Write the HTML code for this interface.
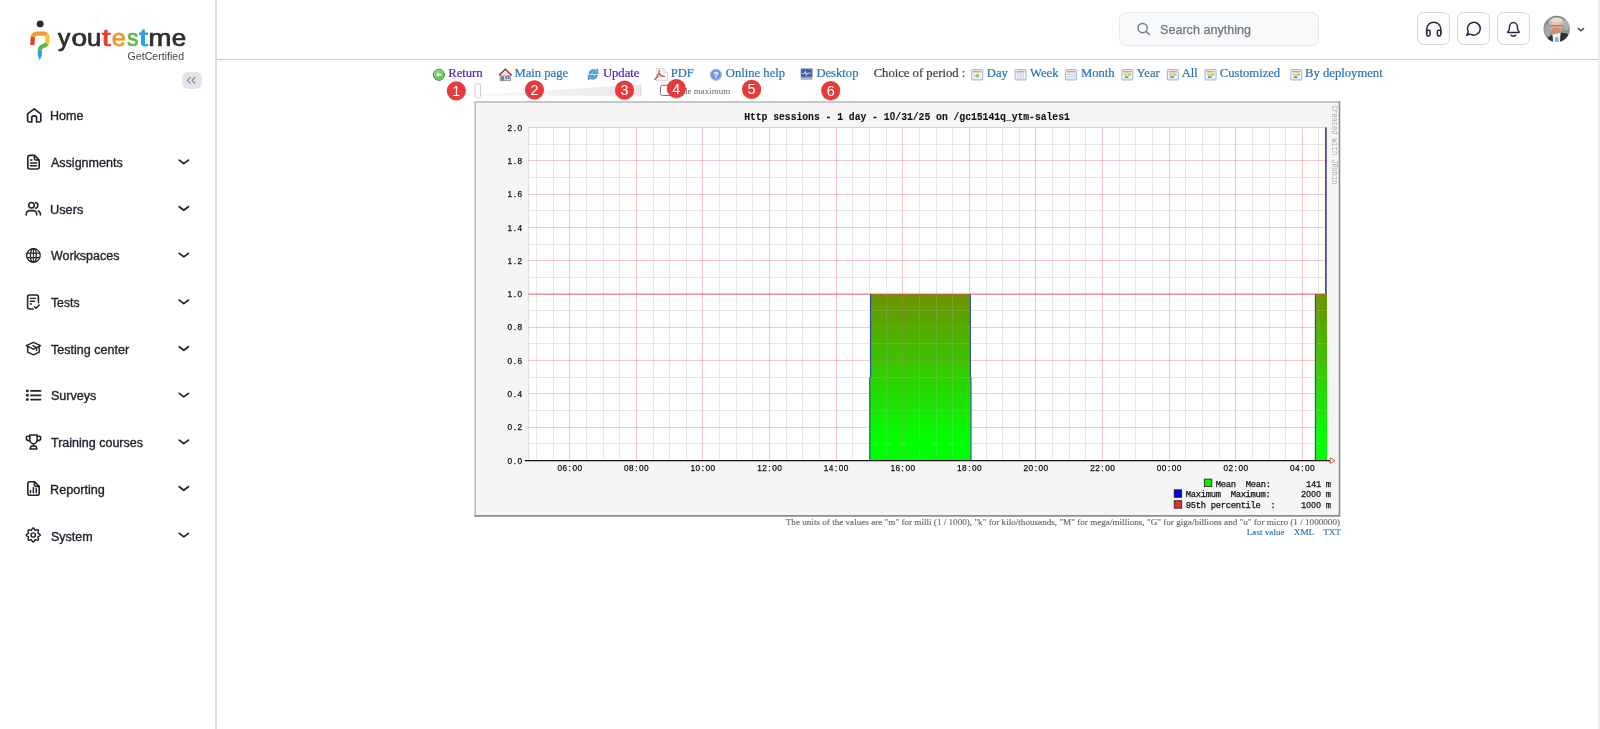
<!DOCTYPE html>
<html><head><meta charset="utf-8"><title>YouTestMe</title>
<style>
*{box-sizing:border-box;margin:0;padding:0}
html,body{width:1600px;height:729px;overflow:hidden;background:#fff}
body{position:relative;font-family:"Liberation Sans",sans-serif;color:#1f2430}
.abs{position:absolute}
svg{position:absolute;left:0;top:0;overflow:visible}
.ml{position:absolute;height:20px;line-height:20px;font-size:12.3px;color:#20242e;white-space:nowrap;transform-origin:0 50%;-webkit-text-stroke:0.35px #20242e}
.tt{position:absolute;top:66px;height:15px;line-height:15px;font-family:"Liberation Serif",serif;font-size:12.65px;white-space:nowrap;color:#2874b2;transform-origin:0 50%;-webkit-text-stroke:0.2px currentColor}
.tt.v{color:#5420a6}
.tt.k{color:#3a3a3a}
.badge{position:absolute;width:19px;height:19px;border-radius:50%;background:#e5383b;color:#fff;font-family:"Liberation Sans",sans-serif;font-size:14px;line-height:19px;text-align:center;box-shadow:0 1px 2px rgba(0,0,0,.3)}
.hb{position:absolute;top:12.2px;width:32.6px;height:32.8px;border:1.1px solid #cfd2d9;border-radius:6.5px;background:#fdfdfe}
</style></head><body><div id="root" style="position:absolute;left:0;top:0;width:1600px;height:729px;opacity:0.999">

<div class="abs" style="left:215px;top:0;width:2px;height:729px;background:#dcdce9"></div>
<div class="abs" style="left:217px;top:59px;width:1383px;height:1px;background:#c8cbd2"></div>
<div class="abs" style="left:181.5px;top:72px;width:20.5px;height:16.5px;border-radius:6px;background:#e2e6ec"></div>
<div class="ml" id="ml0" style="left:49.72px;top:106.04px;transform:scaleX(1.0175)">Home</div>
<div class="ml" id="ml1" style="left:51.43px;top:152.78px;transform:scaleX(1.0180)">Assignments</div>
<div class="ml" id="ml2" style="left:50.26px;top:199.52px;transform:scaleX(1.0382)">Users</div>
<div class="ml" id="ml3" style="left:51.20px;top:246.26px;transform:scaleX(1.0139)">Workspaces</div>
<div class="ml" id="ml4" style="left:50.98px;top:293.00px;transform:scaleX(0.9949)">Tests</div>
<div class="ml" id="ml5" style="left:50.97px;top:339.74px;transform:scaleX(1.0199)">Testing center</div>
<div class="ml" id="ml6" style="left:50.68px;top:386.48px;transform:scaleX(1.0201)">Surveys</div>
<div class="ml" id="ml7" style="left:50.97px;top:433.22px;transform:scaleX(1.0166)">Training courses</div>
<div class="ml" id="ml8" style="left:50.21px;top:479.96px;transform:scaleX(1.0285)">Reporting</div>
<div class="ml" id="ml9" style="left:50.68px;top:526.70px;transform:scaleX(1.0167)">System</div>
<svg width="217" height="729" viewBox="0 0 217 729" fill="none" stroke="#20242e" stroke-width="1.7" stroke-linecap="round" stroke-linejoin="round">
<g stroke="#7b8494" stroke-width="1.1"><path d="M190.4 77.3 L187.4 80.3 L190.4 83.3"/><path d="M194.9 77.3 L191.9 80.3 L194.9 83.3"/></g>
<path d="M179.2 160.1 L183.8 163.6 L188.4 160.1" stroke-width="1.75"/>
<path d="M179.2 206.7 L183.8 210.2 L188.4 206.7" stroke-width="1.75"/>
<path d="M179.2 253.4 L183.8 256.9 L188.4 253.4" stroke-width="1.75"/>
<path d="M179.2 300.1 L183.8 303.6 L188.4 300.1" stroke-width="1.75"/>
<path d="M179.2 346.8 L183.8 350.3 L188.4 346.8" stroke-width="1.75"/>
<path d="M179.2 393.4 L183.8 396.9 L188.4 393.4" stroke-width="1.75"/>
<path d="M179.2 440.1 L183.8 443.6 L188.4 440.1" stroke-width="1.75"/>
<path d="M179.2 486.8 L183.8 490.3 L188.4 486.8" stroke-width="1.75"/>
<path d="M179.2 533.4 L183.8 536.9 L188.4 533.4" stroke-width="1.75"/>
<path d="M27.6 113.9 L34.2 108.9 L40.8 113.9 V120.4 a1.6 1.6 0 0 1 -1.6 1.6 H36.6 V117.6 a1.8 1.8 0 0 0 -1.8 -1.8 h-1.2 a1.8 1.8 0 0 0 -1.8 1.8 V122 H29.2 a1.6 1.6 0 0 1 -1.6 -1.6 Z"/>
<path d="M29.8 155.4 H34.6 L39.2 160.0 V167 a2 2 0 0 1 -2 2 H29.8 a2 2 0 0 1 -2 -2 V157.4 a2 2 0 0 1 2 -2 Z M34.4 155.6 V158.6 a1.4 1.4 0 0 0 1.4 1.4 H39" stroke-width="1.6"/>
<path d="M30.4 160.1 H31.9 M30.4 162.9 H36.6 M30.4 165.7 H36.6" stroke-width="1.5"/>
<circle cx="31.5" cy="205.3" r="2.75" stroke-width="1.6"/>
<path d="M35.6 202.4 a3 3 0 0 1 0 5.8" stroke-width="1.6"/>
<path d="M26.3 214.9 v-0.9 a3.4 3.4 0 0 1 3.4 -3.4 h3.6 a3.4 3.4 0 0 1 3.4 3.4 v0.9" stroke-width="1.6"/>
<path d="M38.3 210.9 a3.4 3.4 0 0 1 2.1 3.1 v0.9" stroke-width="1.6"/>
<g stroke-width="1.3"><circle cx="33.4" cy="255.4" r="6.75"/><ellipse cx="33.4" cy="255.4" rx="2.9" ry="6.8"/><path d="M27.1 253.2 H39.7 M27.1 257.6 H39.7"/><path d="M33.4 248.8 V262" stroke-width="1.05"/></g>
<path d="M33.2 309 H29.6 a2 2 0 0 1 -2 -2 V297 a2 2 0 0 1 2 -2 H36.4 a2 2 0 0 1 2 2 V302.6" stroke-width="1.6"/>
<path d="M30.3 298.4 H35.6 M30.3 301.2 H34.5 M30.3 304 H31.4" stroke-width="1.4"/>
<path d="M34.5 306.8 L35.9 308.2 L39.3 305" stroke-width="1.5"/>
<g stroke-width="1.45"><path d="M33.4 342.3 L40.5 345.7 L33.4 349.2 L26.3 345.7 Z"/><path d="M27.7 346.6 V352.1 L33.4 354.8 L39.2 352.1 V346.6"/><path d="M33 345.6 L36.5 347.7 V350.4"/></g>
<g stroke-width="1.8"><path d="M31 390.9 H40.5 M31 395.3 H40.5 M31 399.6 H40.5"/></g>
<g fill="#20242e" stroke="none"><circle cx="27.3" cy="390.9" r="1.45"/><circle cx="27.3" cy="395.3" r="1.45"/><circle cx="27.3" cy="399.6" r="1.45"/></g>
<g stroke-width="1.55"><path d="M29.8 434.9 H37.2 V439.8 a3.7 3.9 0 0 1 -7.4 0 Z"/><path d="M29.8 436.2 H27.6 a1.3 1.3 0 0 0 -1.3 1.3 v0.6 a2.6 2.6 0 0 0 2.6 2.6 h1"/><path d="M37.2 436.2 H39.4 a1.3 1.3 0 0 1 1.3 1.3 v0.6 a2.6 2.6 0 0 1 -2.6 2.6 h-1"/><path d="M33.5 443.8 V446"/><path d="M31.2 446 H35.8 L37 448.9 H30 Z"/></g>
<path d="M29.8 481.8 H34.6 L39.2 486.40000000000003 V493.2 a2 2 0 0 1 -2 2 H29.8 a2 2 0 0 1 -2 -2 V483.8 a2 2 0 0 1 2 -2 Z M34.4 482.0 V485.0 a1.4 1.4 0 0 0 1.4 1.4 H39" stroke-width="1.6"/>
<path d="M30.5 490.4 V492.8 M33.4 487.5 V492.8 M36.3 488.6 V492.8" stroke-width="1.5"/>
<path d="M33.25 528.00 L33.52 528.05 L33.78 528.20 L34.03 528.44 L34.24 528.73 L34.43 529.07 L34.59 529.40 L34.74 529.71 L34.88 529.98 L35.03 530.17 L35.20 530.29 L35.40 530.33 L35.65 530.29 L35.93 530.21 L36.26 530.09 L36.61 529.97 L36.98 529.87 L37.34 529.81 L37.68 529.82 L37.97 529.89 L38.20 530.05 L38.36 530.28 L38.43 530.57 L38.44 530.91 L38.38 531.27 L38.28 531.64 L38.16 531.99 L38.04 532.32 L37.96 532.60 L37.92 532.85 L37.96 533.05 L38.08 533.22 L38.27 533.37 L38.54 533.51 L38.85 533.66 L39.18 533.82 L39.52 534.01 L39.81 534.22 L40.05 534.47 L40.20 534.73 L40.25 535.00 L40.20 535.27 L40.05 535.53 L39.81 535.78 L39.52 535.99 L39.18 536.18 L38.85 536.34 L38.54 536.49 L38.27 536.63 L38.08 536.78 L37.96 536.95 L37.92 537.15 L37.96 537.40 L38.04 537.68 L38.16 538.01 L38.28 538.36 L38.38 538.73 L38.44 539.09 L38.43 539.43 L38.36 539.72 L38.20 539.95 L37.97 540.11 L37.68 540.18 L37.34 540.19 L36.98 540.13 L36.61 540.03 L36.26 539.91 L35.93 539.79 L35.65 539.71 L35.40 539.67 L35.20 539.71 L35.03 539.83 L34.88 540.02 L34.74 540.29 L34.59 540.60 L34.43 540.93 L34.24 541.27 L34.03 541.56 L33.78 541.80 L33.52 541.95 L33.25 542.00 L32.98 541.95 L32.72 541.80 L32.47 541.56 L32.26 541.27 L32.07 540.93 L31.91 540.60 L31.76 540.29 L31.62 540.02 L31.47 539.83 L31.30 539.71 L31.10 539.67 L30.85 539.71 L30.57 539.79 L30.24 539.91 L29.89 540.03 L29.52 540.13 L29.16 540.19 L28.82 540.18 L28.53 540.11 L28.30 539.95 L28.14 539.72 L28.07 539.43 L28.06 539.09 L28.12 538.73 L28.22 538.36 L28.34 538.01 L28.46 537.68 L28.54 537.40 L28.58 537.15 L28.54 536.95 L28.42 536.78 L28.23 536.63 L27.96 536.49 L27.65 536.34 L27.32 536.18 L26.98 535.99 L26.69 535.78 L26.45 535.53 L26.30 535.27 L26.25 535.00 L26.30 534.73 L26.45 534.47 L26.69 534.22 L26.98 534.01 L27.32 533.82 L27.65 533.66 L27.96 533.51 L28.23 533.37 L28.42 533.22 L28.54 533.05 L28.58 532.85 L28.54 532.60 L28.46 532.32 L28.34 531.99 L28.22 531.64 L28.12 531.27 L28.06 530.91 L28.07 530.57 L28.14 530.28 L28.30 530.05 L28.53 529.89 L28.82 529.82 L29.16 529.81 L29.52 529.87 L29.89 529.97 L30.24 530.09 L30.57 530.21 L30.85 530.29 L31.10 530.33 L31.30 530.29 L31.47 530.17 L31.62 529.98 L31.76 529.71 L31.91 529.40 L32.07 529.07 L32.26 528.73 L32.47 528.44 L32.72 528.20 L32.98 528.05 L33.25 528.00 Z" stroke-width="1.45"/>
<circle cx="33.25" cy="535.0" r="2.15" stroke-width="1.45"/>
</svg>
<svg width="217" height="70" viewBox="0 0 217 70">
<circle cx="40.2" cy="23.9" r="3.45" fill="#2b2d2f"/>
<g fill="none" stroke-width="4.3" stroke-linecap="butt" stroke-linejoin="round">
<path d="M32.25 45.2 L33.0 36.0" stroke="#e2442b"/>
<path d="M32.9 37 Q33.2 33.6 38 33.55 L43.4 33.6 Q45.6 33.6 46.7 34.9" stroke="#f59a34"/>
<path d="M46.3 34.5 Q47.6 35.8 47.5 38.2 L47.3 41.4 Q47.2 43 46.4 44" stroke="#fac52a"/>
<path d="M46.8 43.5 Q45.7 45.3 43.3 46 Q39.8 47 39.8 50.6" stroke="#55b947"/>
</g>
<path d="M37.65 50.2 H41.95 L41.7 55.6 L39.7 60.4 L37.9 55.6 Z" fill="#2a9de2"/>
</svg>
<svg width="217" height="70" viewBox="0 0 217 70" font-family="Liberation Sans" stroke-linejoin="round">
<text transform="translate(58.12 45.5) scale(1.061 1)" font-size="23.1" fill="#2e2e2e" stroke="#2e2e2e" stroke-width="0.75">y</text>
<text transform="translate(71.50 45.5) scale(1.215 1)" font-size="23.1" fill="#2e2e2e" stroke="#2e2e2e" stroke-width="0.75">o</text>
<text transform="translate(86.92 45.5) scale(1.106 1)" font-size="23.1" fill="#2e2e2e" stroke="#2e2e2e" stroke-width="0.75">u</text>
<text transform="translate(101.69 45.5) scale(1.399 1)" font-size="23.1" fill="#e0402c" stroke="#e0402c" stroke-width="0.75">t</text>
<text transform="translate(111.70 45.5) scale(1.093 1)" font-size="23.1" fill="#f5922f" stroke="#f5922f" stroke-width="0.75">e</text>
<text transform="translate(126.94 45.5) scale(0.988 1)" font-size="23.1" fill="#5cb947" stroke="#5cb947" stroke-width="0.75">s</text>
<text transform="translate(138.88 45.5) scale(1.415 1)" font-size="23.1" fill="#2c9fe0" stroke="#2c9fe0" stroke-width="0.75">t</text>
<text transform="translate(148.55 45.5) scale(1.189 1)" font-size="23.1" fill="#2e2e2e" stroke="#2e2e2e" stroke-width="0.75">m</text>
<text transform="translate(171.78 45.5) scale(1.121 1)" font-size="23.1" fill="#2e2e2e" stroke="#2e2e2e" stroke-width="0.75">e</text>
</svg>
<div class="abs" id="getc" style="left:127.6px;top:49.3px;height:14px;line-height:14px;font-size:10.6px;color:#454545;white-space:nowrap;transform-origin:0 50%">GetCertified</div>
<div class="abs" style="left:1119px;top:12px;width:200px;height:34px;border:1px solid #e5e8ed;border-radius:7px;background:#f8f9fb"></div>
<div class="abs" id="srch" style="left:1159.6px;top:20.9px;height:18px;line-height:18px;font-size:13px;transform:scaleX(0.9686);color:#6e7683;white-space:nowrap;transform-origin:0 50%;-webkit-text-stroke:0.25px #6e7683">Search anything</div>
<div class="hb" style="left:1417.2px"></div>
<div class="hb" style="left:1457.3px"></div>
<div class="hb" style="left:1497.4px"></div>
<svg width="1600" height="60" viewBox="0 0 1600 60" fill="none" stroke-linecap="round" stroke-linejoin="round">
<g stroke="#6e7683" stroke-width="1.4"><circle cx="1142.6" cy="28.1" r="4.6"/><path d="M1146 31.5 L1149.4 34.6"/></g>
<g stroke="#23264c" stroke-width="1.5">
<path d="M1426.7 33 V29.2 a7.05 7.05 0 0 1 14.1 0 V33"/>
<path d="M1426.7 31.4 a1.2 1.2 0 0 1 1.2 -1.2 h0.9 a1.3 1.3 0 0 1 1.3 1.3 v3 a1.5 1.5 0 0 1 -1.5 1.5 h-0.4 a1.5 1.5 0 0 1 -1.5 -1.5 Z"/>
<path d="M1440.8 31.4 a1.2 1.2 0 0 0 -1.2 -1.2 h-0.9 a1.3 1.3 0 0 0 -1.3 1.3 v3 a1.5 1.5 0 0 0 1.5 1.5 h0.4 a1.5 1.5 0 0 0 1.5 -1.5 Z"/>
<path d="M1469.2 34.2 L1466.7 35.3 L1468.3 31.9 A6.4 6.4 0 1 1 1470.9 34.4 Q1470 34 1469.2 34.2 Z"/>
<path d="M1509.5 27.2 a3.95 4.6 0 0 1 7.9 0 c0 3.4 1.7 4.6 1.7 4.6 a0.35 0.35 0 0 1 -0.2 0.6 H1508 a0.35 0.35 0 0 1 -0.2 -0.6 s1.7 -1.2 1.7 -4.6 Z"/><path d="M1511.3 35.2 a2.4 1.6 0 0 0 4.3 0"/>
</g>
<path d="M1578.2 28.4 L1580.9 30.8 L1583.6 28.4" stroke="#30333b" stroke-width="1.35"/>
<defs><clipPath id="av"><circle cx="1556.65" cy="28.9" r="13.15"/></clipPath>
<filter id="avb" x="-10%" y="-10%" width="120%" height="120%"><feGaussianBlur stdDeviation="0.65"/></filter>
<radialGradient id="avbg" cx="0.5" cy="0.45" r="0.6"><stop offset="0" stop-color="#a9aca8"/><stop offset="0.7" stop-color="#878b88"/><stop offset="1" stop-color="#6c706e"/></radialGradient></defs>
<g clip-path="url(#av)" stroke="none"><g filter="url(#avb)">
<rect x="1541" y="13" width="32" height="32" fill="url(#avbg)"/>
<ellipse cx="1547.6" cy="30" rx="3.2" ry="6" fill="#a9adab" opacity="0.8"/><ellipse cx="1566.4" cy="24.5" rx="3" ry="6" fill="#b3b6b3" opacity="0.85"/><ellipse cx="1556" cy="17" rx="7" ry="2" fill="#6f7472" opacity="0.6"/>
<path d="M1541.5 46 L1545.6 39.6 L1552.2 34.6 L1556.2 42.5 L1560.4 32.6 L1567 33.4 L1572 38.6 L1572 46 Z" fill="#2e3239"/>
<path d="M1552.4 34.4 L1560.6 32.4 L1559.6 46 L1553.6 46 Z" fill="#f0f2f5"/>
<path d="M1555.3 37.4 L1558.1 36.9 L1559.4 46 L1554.5 46 Z" fill="#8ab0cc"/>
<ellipse cx="1556.3" cy="22.2" rx="7.5" ry="5" fill="#cbc5b7"/>
<ellipse cx="1556.9" cy="20.2" rx="5.4" ry="2.5" fill="#e2ded3"/>
<ellipse cx="1556.4" cy="27.9" rx="6" ry="6" fill="#dcaa91"/>
<ellipse cx="1556.4" cy="30.6" rx="4.6" ry="3" fill="#cd8b74" opacity="0.85"/>
<ellipse cx="1556.4" cy="23.7" rx="4.6" ry="1.4" fill="#e6c5ae" opacity="0.9"/>
<path d="M1551.2 25.7 H1561.8" stroke="#705f57" stroke-width="0.9" opacity="0.75"/>
</g></g>
</svg>
<div class="abs" style="left:1598px;top:0;width:2px;height:729px;background:#f7e9ec"></div>
<div class="tt v" id="tt0" style="left:448.25px;transform:scaleX(1.0000)">Return</div>
<div class="tt " id="tt1" style="left:514.42px;transform:scaleX(1.0000)">Main page</div>
<div class="tt v" id="tt2" style="left:602.92px;transform:scaleX(1.0000)">Update</div>
<div class="tt " id="tt3" style="left:670.64px;transform:scaleX(1.0000)">PDF</div>
<div class="tt " id="tt4" style="left:725.80px;transform:scaleX(1.0000)">Online help</div>
<div class="tt " id="tt5" style="left:816.38px;transform:scaleX(1.0000)">Desktop</div>
<div class="tt k" id="tt6" style="left:873.66px;transform:scaleX(1.0000)">Choice of period :</div>
<div class="tt " id="tt7" style="left:986.85px;transform:scaleX(1.0000)">Day</div>
<div class="tt " id="tt8" style="left:1030.10px;transform:scaleX(1.0000)">Week</div>
<div class="tt " id="tt9" style="left:1080.98px;transform:scaleX(1.0000)">Month</div>
<div class="tt " id="tt10" style="left:1136.45px;transform:scaleX(1.0000)">Year</div>
<div class="tt " id="tt11" style="left:1181.63px;transform:scaleX(1.0000)">All</div>
<div class="tt " id="tt12" style="left:1219.80px;transform:scaleX(1.0000)">Customized</div>
<div class="tt " id="tt13" style="left:1305.08px;transform:scaleX(1.0000)">By deployment</div>
<svg width="1600" height="110" viewBox="0 0 1600 110">
<defs><linearGradient id="wd" x1="0" x2="1"><stop offset="0" stop-color="#f7f7f7"/><stop offset="1" stop-color="#e8e8e8"/></linearGradient></defs>
<path d="M481 94.6 L640.6 84.6 V95.8 H481 Z" fill="url(#wd)"/>
<path d="M640.9 84.4 V96" stroke="#d4d4d4" stroke-width="0.9"/>
<rect x="474.9" y="84" width="5.6" height="13.4" rx="0.8" fill="#fff" stroke="#d2cfcf" stroke-width="1"/>
<rect x="660.5" y="85.3" width="10.8" height="10.2" rx="2" fill="#fff" stroke="#767676" stroke-width="1"/>
</svg>
<div class="abs" id="hidemax" style="left:674px;top:85px;height:12px;line-height:12px;font-family:'Liberation Serif',serif;font-size:9px;color:#636363;white-space:nowrap;transform-origin:0 50%">Hide maximum</div>
<svg width="1600" height="110" viewBox="0 0 1600 110">
<defs>
<radialGradient id="rg1" cx="0.45" cy="0.4" r="0.6"><stop offset="0" stop-color="#98e07e"/><stop offset="0.75" stop-color="#58b946"/><stop offset="1" stop-color="#4aa83c"/></radialGradient>
<radialGradient id="hg1" cx="0.45" cy="0.4" r="0.6"><stop offset="0" stop-color="#9dbdf0"/><stop offset="0.65" stop-color="#5b8fd6"/><stop offset="1" stop-color="#8fb0e4"/></radialGradient>
</defs>
<circle cx="438.9" cy="74.8" r="5.55" fill="url(#rg1)" stroke="#3f8e3c" stroke-width="1"/>
<circle cx="438.9" cy="74.8" r="4.45" fill="none" stroke="#c4f0b4" stroke-width="0.7" opacity="0.85"/>
<path d="M435.9 74.8 L438.7 72.2 V73.8 H441.6 V75.8 H438.7 V77.4 Z" fill="#e6fadf"/>
<path d="M500 75.2 H510.6 V80.6 H500 Z" fill="#d2d2ce" stroke="#84847e" stroke-width="0.8"/>
<rect x="501.2" y="76.2" width="2.6" height="4.2" fill="#6a7686"/>
<rect x="505.6" y="76.2" width="3.8" height="2.8" fill="#3d5a96"/>
<path d="M505.6 77.6 H509.4 M507.5 76.2 V79" stroke="#dfe6f2" stroke-width="0.5"/>
<path d="M499.1 75.2 L505.35 69.2 L511.6 75.2" fill="none" stroke="#b01f22" stroke-width="1.45" stroke-linejoin="miter"/>
<path d="M500.6 75.3 L505.35 70.7 L510.1 75.3 Z" fill="#e6e6e2"/>
<path d="M588.9 73.4 Q589.6 69.7 593.4 69.5 Q594.8 69.5 595.8 70.2 L597.7 68.9 L597.9 73.7 L592.6 73.7 L594.2 72.3 Q592.3 71.4 591.2 73.4 Z" fill="#58b2e8" stroke="#2d78b6" stroke-width="0.7" stroke-linejoin="round"/>
<path d="M588.9 73.4 Q589.6 69.7 593.4 69.5 Q594.8 69.5 595.8 70.2 L597.7 68.9 L597.9 73.7 L592.6 73.7 L594.2 72.3 Q592.3 71.4 591.2 73.4 Z" fill="#58b2e8" stroke="#2d78b6" stroke-width="0.7" stroke-linejoin="round" transform="rotate(180 593.1 74.4)"/>
<path d="M656.3 68.5 H663.7 L667.6 72.4 V80.8 H656.3 Z" fill="#fbfbfb" stroke="#cfd4d3" stroke-width="0.9"/>
<path d="M663.7 68.5 V72.4 H667.6" fill="#eef0f0" stroke="#cfd4d3" stroke-width="0.8"/>
<g fill="none" stroke="#c23b3d" stroke-width="1.15" stroke-linecap="round"><path d="M654.7 79.6 Q657.8 76.6 658.8 73.2 Q659.5 71 659.1 70.2"/><path d="M658.9 73 Q660.4 76.2 664.5 76.5"/><path d="M657.2 77.2 Q660 75.4 662.6 75.9" stroke-width="0.7" opacity="0.7"/></g>
<circle cx="716" cy="74.8" r="5.6" fill="url(#hg1)" stroke="#a8c0e8" stroke-width="0.9"/>
<text x="716" y="78.2" font-family="Liberation Sans" font-weight="bold" font-size="8.6" fill="#fff" text-anchor="middle">?</text>
<rect x="800.8" y="68.6" width="11.6" height="11.3" fill="#aeb7ca"/>
<rect x="800.8" y="68.6" width="11.6" height="8.7" fill="#4565ac"/>
<rect x="801.8" y="69.6" width="9.6" height="6.7" fill="#3a5ba4" stroke="#6484c6" stroke-width="0.5"/>
<path d="M802.2 73.6 H804.4 L805.4 71.4 L806.4 75.4 L807.2 73.2 H810.8" fill="none" stroke="#fff" stroke-width="0.8"/>
<rect x="971.6999999999999" y="69.6" width="11" height="10.4" rx="1" fill="#f6f8fd" stroke="#aab9de" stroke-width="1.15"/>
<rect x="973.0999999999999" y="71" width="8.2" height="1.5" fill="#f2995c"/>
<rect x="972.0999999999999" y="78.6" width="10.2" height="1.3" fill="#bccbee"/>
<rect x="974.3" y="74.2" width="5.6" height="2.8" fill="#e8f6dc"/>
<path d="M974.9 74.6 V76.8 M976.5 74.6 h2.2 v2.2 h-2.2 Z" fill="none" stroke="#58b23c" stroke-width="0.8"/>
<rect x="1015.1" y="69.6" width="11" height="10.4" rx="1" fill="#f6f8fd" stroke="#aab9de" stroke-width="1.15"/>
<rect x="1016.5" y="71" width="8.2" height="1.5" fill="#f2995c"/>
<rect x="1015.5" y="78.6" width="10.2" height="1.3" fill="#bccbee"/>
<path d="M1017.9000000000001 73.2 V78.2 M1020.5 73.2 V78.2 M1023.1 73.2 V78.2" stroke="#c4d2f2" stroke-width="1.4"/>
<rect x="1065.5" y="69.6" width="11" height="10.4" rx="1" fill="#f6f8fd" stroke="#aab9de" stroke-width="1.15"/>
<rect x="1066.8999999999999" y="71" width="8.2" height="1.5" fill="#f2995c"/>
<rect x="1065.8999999999999" y="78.6" width="10.2" height="1.3" fill="#bccbee"/>
<path d="M1066.8999999999999 74.4 H1075.1 M1066.8999999999999 76.6 H1075.1" stroke="#c4d2f2" stroke-width="1.2"/>
<rect x="1121.9" y="69.6" width="11" height="10.4" rx="1" fill="#f6f8fd" stroke="#aab9de" stroke-width="1.15"/>
<rect x="1123.3" y="71" width="8.2" height="1.5" fill="#f2995c"/>
<rect x="1122.3" y="78.6" width="10.2" height="1.3" fill="#bccbee"/>
<rect x="1123.9" y="73.6" width="3" height="2" fill="#f0c058"/>
<rect x="1127.5" y="73.6" width="3.6" height="2" fill="#8ccf6c"/>
<rect x="1124.9" y="76.2" width="3.6" height="1.8" fill="#58b23c"/>
<rect x="1167.3000000000002" y="69.6" width="11" height="10.4" rx="1" fill="#f6f8fd" stroke="#aab9de" stroke-width="1.15"/>
<rect x="1168.7" y="71" width="8.2" height="1.5" fill="#f2995c"/>
<rect x="1167.7" y="78.6" width="10.2" height="1.3" fill="#bccbee"/>
<rect x="1169.3000000000002" y="73.6" width="3" height="2" fill="#f0c058"/>
<rect x="1172.9" y="73.6" width="3.6" height="2" fill="#8ccf6c"/>
<rect x="1170.3000000000002" y="76.2" width="3.6" height="1.8" fill="#58b23c"/>
<rect x="1205.0" y="69.6" width="11" height="10.4" rx="1" fill="#f6f8fd" stroke="#aab9de" stroke-width="1.15"/>
<rect x="1206.3999999999999" y="71" width="8.2" height="1.5" fill="#f2995c"/>
<rect x="1205.3999999999999" y="78.6" width="10.2" height="1.3" fill="#bccbee"/>
<rect x="1207.0" y="73.6" width="3" height="2" fill="#f0c058"/>
<rect x="1210.6" y="73.6" width="3.6" height="2" fill="#8ccf6c"/>
<rect x="1208.0" y="76.2" width="3.6" height="1.8" fill="#58b23c"/>
<rect x="1290.8000000000002" y="69.6" width="11" height="10.4" rx="1" fill="#f6f8fd" stroke="#aab9de" stroke-width="1.15"/>
<rect x="1292.2" y="71" width="8.2" height="1.5" fill="#f2995c"/>
<rect x="1291.2" y="78.6" width="10.2" height="1.3" fill="#bccbee"/>
<rect x="1292.8000000000002" y="73.6" width="3" height="2" fill="#f0c058"/>
<rect x="1296.4" y="73.6" width="3.6" height="2" fill="#8ccf6c"/>
<rect x="1293.8000000000002" y="76.2" width="3.6" height="1.8" fill="#58b23c"/>
</svg>
<svg width="1600" height="729" viewBox="0 0 1600 729" font-family="Liberation Mono, monospace">
<defs><linearGradient id="gg" gradientUnits="userSpaceOnUse" x1="0" y1="100" x2="0" y2="440"><stop offset="0" stop-color="#ff0000"/><stop offset="1" stop-color="#00ff00"/></linearGradient>
<clipPath id="pc"><rect x="528.3" y="127.0" width="798.7" height="333.5"/></clipPath></defs>
<rect x="474.5" y="101.2" width="865.7" height="415.50000000000006" fill="#f5f5f5"/>
<path d="M475.2 516.7 V101.9 H1340.2" fill="none" stroke="#b9b9b9" stroke-width="1.5"/>
<path d="M474.5 515.9000000000001 H1339.5 V101.2" fill="none" stroke="#8e8e8e" stroke-width="1.6"/>
<rect x="528.3" y="127.5" width="798.7" height="333.0" fill="#fff"/>
<defs><clipPath id="ac"><path d="M869.8 460.5 V377.2 H870.7 V294.0 H970.0 V377.2 H970.8 V460.5 Z M1315.6 460.5 V294.0 H1327.0 V460.5 Z"/></clipPath></defs>
<g id="grid" clip-path="url(#pc)" shape-rendering="crispEdges"><line x1="536.4" y1="127.5" x2="536.4" y2="460.5" stroke="#c0c0c0" stroke-opacity="0.38" stroke-width="1"/><line x1="553.1" y1="127.5" x2="553.1" y2="460.5" stroke="#c0c0c0" stroke-opacity="0.38" stroke-width="1"/><line x1="569.7" y1="127.5" x2="569.7" y2="460.5" stroke="#e4707c" stroke-opacity="0.42" stroke-width="1"/><line x1="586.4" y1="127.5" x2="586.4" y2="460.5" stroke="#c0c0c0" stroke-opacity="0.38" stroke-width="1"/><line x1="603.0" y1="127.5" x2="603.0" y2="460.5" stroke="#c0c0c0" stroke-opacity="0.38" stroke-width="1"/><line x1="619.7" y1="127.5" x2="619.7" y2="460.5" stroke="#c0c0c0" stroke-opacity="0.38" stroke-width="1"/><line x1="636.3" y1="127.5" x2="636.3" y2="460.5" stroke="#e4707c" stroke-opacity="0.42" stroke-width="1"/><line x1="653.0" y1="127.5" x2="653.0" y2="460.5" stroke="#c0c0c0" stroke-opacity="0.38" stroke-width="1"/><line x1="669.6" y1="127.5" x2="669.6" y2="460.5" stroke="#c0c0c0" stroke-opacity="0.38" stroke-width="1"/><line x1="686.2" y1="127.5" x2="686.2" y2="460.5" stroke="#c0c0c0" stroke-opacity="0.38" stroke-width="1"/><line x1="702.9" y1="127.5" x2="702.9" y2="460.5" stroke="#e4707c" stroke-opacity="0.42" stroke-width="1"/><line x1="719.6" y1="127.5" x2="719.6" y2="460.5" stroke="#c0c0c0" stroke-opacity="0.38" stroke-width="1"/><line x1="736.2" y1="127.5" x2="736.2" y2="460.5" stroke="#c0c0c0" stroke-opacity="0.38" stroke-width="1"/><line x1="752.9" y1="127.5" x2="752.9" y2="460.5" stroke="#c0c0c0" stroke-opacity="0.38" stroke-width="1"/><line x1="769.5" y1="127.5" x2="769.5" y2="460.5" stroke="#e4707c" stroke-opacity="0.42" stroke-width="1"/><line x1="786.2" y1="127.5" x2="786.2" y2="460.5" stroke="#c0c0c0" stroke-opacity="0.38" stroke-width="1"/><line x1="802.8" y1="127.5" x2="802.8" y2="460.5" stroke="#c0c0c0" stroke-opacity="0.38" stroke-width="1"/><line x1="819.5" y1="127.5" x2="819.5" y2="460.5" stroke="#c0c0c0" stroke-opacity="0.38" stroke-width="1"/><line x1="836.1" y1="127.5" x2="836.1" y2="460.5" stroke="#e4707c" stroke-opacity="0.42" stroke-width="1"/><line x1="852.8" y1="127.5" x2="852.8" y2="460.5" stroke="#c0c0c0" stroke-opacity="0.38" stroke-width="1"/><line x1="869.4" y1="127.5" x2="869.4" y2="460.5" stroke="#c0c0c0" stroke-opacity="0.38" stroke-width="1"/><line x1="886.0" y1="127.5" x2="886.0" y2="460.5" stroke="#c0c0c0" stroke-opacity="0.38" stroke-width="1"/><line x1="902.7" y1="127.5" x2="902.7" y2="460.5" stroke="#e4707c" stroke-opacity="0.42" stroke-width="1"/><line x1="919.4" y1="127.5" x2="919.4" y2="460.5" stroke="#c0c0c0" stroke-opacity="0.38" stroke-width="1"/><line x1="936.0" y1="127.5" x2="936.0" y2="460.5" stroke="#c0c0c0" stroke-opacity="0.38" stroke-width="1"/><line x1="952.7" y1="127.5" x2="952.7" y2="460.5" stroke="#c0c0c0" stroke-opacity="0.38" stroke-width="1"/><line x1="969.3" y1="127.5" x2="969.3" y2="460.5" stroke="#e4707c" stroke-opacity="0.42" stroke-width="1"/><line x1="986.0" y1="127.5" x2="986.0" y2="460.5" stroke="#c0c0c0" stroke-opacity="0.38" stroke-width="1"/><line x1="1002.6" y1="127.5" x2="1002.6" y2="460.5" stroke="#c0c0c0" stroke-opacity="0.38" stroke-width="1"/><line x1="1019.2" y1="127.5" x2="1019.2" y2="460.5" stroke="#c0c0c0" stroke-opacity="0.38" stroke-width="1"/><line x1="1035.9" y1="127.5" x2="1035.9" y2="460.5" stroke="#e4707c" stroke-opacity="0.42" stroke-width="1"/><line x1="1052.5" y1="127.5" x2="1052.5" y2="460.5" stroke="#c0c0c0" stroke-opacity="0.38" stroke-width="1"/><line x1="1069.2" y1="127.5" x2="1069.2" y2="460.5" stroke="#c0c0c0" stroke-opacity="0.38" stroke-width="1"/><line x1="1085.8" y1="127.5" x2="1085.8" y2="460.5" stroke="#c0c0c0" stroke-opacity="0.38" stroke-width="1"/><line x1="1102.5" y1="127.5" x2="1102.5" y2="460.5" stroke="#e4707c" stroke-opacity="0.42" stroke-width="1"/><line x1="1119.2" y1="127.5" x2="1119.2" y2="460.5" stroke="#c0c0c0" stroke-opacity="0.38" stroke-width="1"/><line x1="1135.8" y1="127.5" x2="1135.8" y2="460.5" stroke="#c0c0c0" stroke-opacity="0.38" stroke-width="1"/><line x1="1152.5" y1="127.5" x2="1152.5" y2="460.5" stroke="#c0c0c0" stroke-opacity="0.38" stroke-width="1"/><line x1="1169.1" y1="127.5" x2="1169.1" y2="460.5" stroke="#e4707c" stroke-opacity="0.42" stroke-width="1"/><line x1="1185.8" y1="127.5" x2="1185.8" y2="460.5" stroke="#c0c0c0" stroke-opacity="0.38" stroke-width="1"/><line x1="1202.4" y1="127.5" x2="1202.4" y2="460.5" stroke="#c0c0c0" stroke-opacity="0.38" stroke-width="1"/><line x1="1219.0" y1="127.5" x2="1219.0" y2="460.5" stroke="#c0c0c0" stroke-opacity="0.38" stroke-width="1"/><line x1="1235.7" y1="127.5" x2="1235.7" y2="460.5" stroke="#e4707c" stroke-opacity="0.42" stroke-width="1"/><line x1="1252.3" y1="127.5" x2="1252.3" y2="460.5" stroke="#c0c0c0" stroke-opacity="0.38" stroke-width="1"/><line x1="1269.0" y1="127.5" x2="1269.0" y2="460.5" stroke="#c0c0c0" stroke-opacity="0.38" stroke-width="1"/><line x1="1285.7" y1="127.5" x2="1285.7" y2="460.5" stroke="#c0c0c0" stroke-opacity="0.38" stroke-width="1"/><line x1="1302.3" y1="127.5" x2="1302.3" y2="460.5" stroke="#e4707c" stroke-opacity="0.42" stroke-width="1"/><line x1="1318.9" y1="127.5" x2="1318.9" y2="460.5" stroke="#c0c0c0" stroke-opacity="0.38" stroke-width="1"/><line x1="528.3" y1="460.5" x2="1327.0" y2="460.5" stroke="#e4707c" stroke-opacity="0.37" stroke-width="1"/><line x1="528.3" y1="443.9" x2="1327.0" y2="443.9" stroke="#c0c0c0" stroke-opacity="0.38" stroke-width="1"/><line x1="528.3" y1="427.2" x2="1327.0" y2="427.2" stroke="#e4707c" stroke-opacity="0.37" stroke-width="1"/><line x1="528.3" y1="410.6" x2="1327.0" y2="410.6" stroke="#c0c0c0" stroke-opacity="0.38" stroke-width="1"/><line x1="528.3" y1="393.9" x2="1327.0" y2="393.9" stroke="#e4707c" stroke-opacity="0.37" stroke-width="1"/><line x1="528.3" y1="377.2" x2="1327.0" y2="377.2" stroke="#c0c0c0" stroke-opacity="0.38" stroke-width="1"/><line x1="528.3" y1="360.6" x2="1327.0" y2="360.6" stroke="#e4707c" stroke-opacity="0.37" stroke-width="1"/><line x1="528.3" y1="343.9" x2="1327.0" y2="343.9" stroke="#c0c0c0" stroke-opacity="0.38" stroke-width="1"/><line x1="528.3" y1="327.3" x2="1327.0" y2="327.3" stroke="#e4707c" stroke-opacity="0.37" stroke-width="1"/><line x1="528.3" y1="310.6" x2="1327.0" y2="310.6" stroke="#c0c0c0" stroke-opacity="0.38" stroke-width="1"/><line x1="528.3" y1="294.0" x2="1327.0" y2="294.0" stroke="#e4707c" stroke-opacity="0.37" stroke-width="1"/><line x1="528.3" y1="277.4" x2="1327.0" y2="277.4" stroke="#c0c0c0" stroke-opacity="0.38" stroke-width="1"/><line x1="528.3" y1="260.7" x2="1327.0" y2="260.7" stroke="#e4707c" stroke-opacity="0.37" stroke-width="1"/><line x1="528.3" y1="244.1" x2="1327.0" y2="244.1" stroke="#c0c0c0" stroke-opacity="0.38" stroke-width="1"/><line x1="528.3" y1="227.4" x2="1327.0" y2="227.4" stroke="#e4707c" stroke-opacity="0.37" stroke-width="1"/><line x1="528.3" y1="210.8" x2="1327.0" y2="210.8" stroke="#c0c0c0" stroke-opacity="0.38" stroke-width="1"/><line x1="528.3" y1="194.1" x2="1327.0" y2="194.1" stroke="#e4707c" stroke-opacity="0.37" stroke-width="1"/><line x1="528.3" y1="177.4" x2="1327.0" y2="177.4" stroke="#c0c0c0" stroke-opacity="0.38" stroke-width="1"/><line x1="528.3" y1="160.8" x2="1327.0" y2="160.8" stroke="#e4707c" stroke-opacity="0.37" stroke-width="1"/><line x1="528.3" y1="144.1" x2="1327.0" y2="144.1" stroke="#c0c0c0" stroke-opacity="0.38" stroke-width="1"/><line x1="528.3" y1="127.5" x2="1327.0" y2="127.5" stroke="#e4707c" stroke-opacity="0.37" stroke-width="1"/></g>
<path d="M869.8 460.5 V377.2 H870.7 V294.0 H970.0 V377.2 H970.8 V460.5 Z" fill="url(#gg)"/>
<path d="M1315.6 460.5 V294.0 H1327.0 V460.5 Z" fill="url(#gg)"/>
<g clip-path="url(#ac)"><use href="#grid" opacity="0.55"/></g>
<line x1="528.5999999999999" y1="127.5" x2="528.5999999999999" y2="460.5" stroke="#c8c8c8" stroke-opacity="0.6" stroke-width="1"/>
<line x1="528.3" y1="294.0" x2="1327.0" y2="294.0" stroke="#e0303a" stroke-opacity="0.62" stroke-width="1"/>
<g fill="none" stroke="#1f4a96" stroke-width="1.15" stroke-opacity="0.95">
<path d="M870.6 377.2 V294.0"/><path d="M869.8 460.5 V377.2"/>
<path d="M970.4 294.5 V377.2"/><path d="M971.0 377.2 V460.5"/>
<path d="M1315.3999999999999 460.5 V294.0"/>
</g>
<path d="M1325.9 294.0 V127.5" stroke="#3b3488" stroke-width="1.6" fill="none"/>
<line x1="524.7" y1="460.6" x2="1330.0" y2="460.6" stroke="#111" stroke-width="1.1"/>
<path d="M1330.2 457.9 L1335.0 460.6 L1330.2 463.3 Z" fill="#fff" stroke="#e03030" stroke-width="0.9"/>
<g fill="#111" stroke="#111" stroke-width="0.28" font-size="8.9" >
<text text-anchor="middle" x="509.80 514.80 519.80" y="463.6" font-size="8.7" fill="#111" stroke="#111" stroke-width="0.25" ><tspan font-family="Liberation Sans" font-size="8.26">0</tspan><tspan font-family="Liberation Sans" font-size="8.26">.</tspan><tspan font-family="Liberation Sans" font-size="8.26">0</tspan></text>
<text text-anchor="middle" x="509.80 514.80 519.80" y="430.2" font-size="8.7" fill="#111" stroke="#111" stroke-width="0.25" ><tspan font-family="Liberation Sans" font-size="8.26">0</tspan><tspan font-family="Liberation Sans" font-size="8.26">.</tspan><tspan font-family="Liberation Sans" font-size="8.26">2</tspan></text>
<text text-anchor="middle" x="509.80 514.80 519.80" y="396.9" font-size="8.7" fill="#111" stroke="#111" stroke-width="0.25" ><tspan font-family="Liberation Sans" font-size="8.26">0</tspan><tspan font-family="Liberation Sans" font-size="8.26">.</tspan><tspan font-family="Liberation Sans" font-size="8.26">4</tspan></text>
<text text-anchor="middle" x="509.80 514.80 519.80" y="363.7" font-size="8.7" fill="#111" stroke="#111" stroke-width="0.25" ><tspan font-family="Liberation Sans" font-size="8.26">0</tspan><tspan font-family="Liberation Sans" font-size="8.26">.</tspan><tspan font-family="Liberation Sans" font-size="8.26">6</tspan></text>
<text text-anchor="middle" x="509.80 514.80 519.80" y="330.4" font-size="8.7" fill="#111" stroke="#111" stroke-width="0.25" ><tspan font-family="Liberation Sans" font-size="8.26">0</tspan><tspan font-family="Liberation Sans" font-size="8.26">.</tspan><tspan font-family="Liberation Sans" font-size="8.26">8</tspan></text>
<text text-anchor="middle" x="509.80 514.80 519.80" y="297.1" font-size="8.7" fill="#111" stroke="#111" stroke-width="0.25" ><tspan font-family="Liberation Sans" font-size="8.26">1</tspan><tspan font-family="Liberation Sans" font-size="8.26">.</tspan><tspan font-family="Liberation Sans" font-size="8.26">0</tspan></text>
<text text-anchor="middle" x="509.80 514.80 519.80" y="263.8" font-size="8.7" fill="#111" stroke="#111" stroke-width="0.25" ><tspan font-family="Liberation Sans" font-size="8.26">1</tspan><tspan font-family="Liberation Sans" font-size="8.26">.</tspan><tspan font-family="Liberation Sans" font-size="8.26">2</tspan></text>
<text text-anchor="middle" x="509.80 514.80 519.80" y="230.5" font-size="8.7" fill="#111" stroke="#111" stroke-width="0.25" ><tspan font-family="Liberation Sans" font-size="8.26">1</tspan><tspan font-family="Liberation Sans" font-size="8.26">.</tspan><tspan font-family="Liberation Sans" font-size="8.26">4</tspan></text>
<text text-anchor="middle" x="509.80 514.80 519.80" y="197.2" font-size="8.7" fill="#111" stroke="#111" stroke-width="0.25" ><tspan font-family="Liberation Sans" font-size="8.26">1</tspan><tspan font-family="Liberation Sans" font-size="8.26">.</tspan><tspan font-family="Liberation Sans" font-size="8.26">6</tspan></text>
<text text-anchor="middle" x="509.80 514.80 519.80" y="163.9" font-size="8.7" fill="#111" stroke="#111" stroke-width="0.25" ><tspan font-family="Liberation Sans" font-size="8.26">1</tspan><tspan font-family="Liberation Sans" font-size="8.26">.</tspan><tspan font-family="Liberation Sans" font-size="8.26">8</tspan></text>
<text text-anchor="middle" x="509.80 514.80 519.80" y="130.6" font-size="8.7" fill="#111" stroke="#111" stroke-width="0.25" ><tspan font-family="Liberation Sans" font-size="8.26">2</tspan><tspan font-family="Liberation Sans" font-size="8.26">.</tspan><tspan font-family="Liberation Sans" font-size="8.26">0</tspan></text>
<text text-anchor="middle" x="559.70 564.70 569.70 574.70 579.70" y="471" font-size="8.7" fill="#111" stroke="#111" stroke-width="0.25" ><tspan font-family="Liberation Sans" font-size="8.26">0</tspan><tspan font-family="Liberation Sans" font-size="8.26">6</tspan><tspan font-family="Liberation Sans" font-size="8.26">:</tspan><tspan font-family="Liberation Sans" font-size="8.26">0</tspan><tspan font-family="Liberation Sans" font-size="8.26">0</tspan></text>
<text text-anchor="middle" x="626.30 631.30 636.30 641.30 646.30" y="471" font-size="8.7" fill="#111" stroke="#111" stroke-width="0.25" ><tspan font-family="Liberation Sans" font-size="8.26">0</tspan><tspan font-family="Liberation Sans" font-size="8.26">8</tspan><tspan font-family="Liberation Sans" font-size="8.26">:</tspan><tspan font-family="Liberation Sans" font-size="8.26">0</tspan><tspan font-family="Liberation Sans" font-size="8.26">0</tspan></text>
<text text-anchor="middle" x="692.90 697.90 702.90 707.90 712.90" y="471" font-size="8.7" fill="#111" stroke="#111" stroke-width="0.25" ><tspan font-family="Liberation Sans" font-size="8.26">1</tspan><tspan font-family="Liberation Sans" font-size="8.26">0</tspan><tspan font-family="Liberation Sans" font-size="8.26">:</tspan><tspan font-family="Liberation Sans" font-size="8.26">0</tspan><tspan font-family="Liberation Sans" font-size="8.26">0</tspan></text>
<text text-anchor="middle" x="759.50 764.50 769.50 774.50 779.50" y="471" font-size="8.7" fill="#111" stroke="#111" stroke-width="0.25" ><tspan font-family="Liberation Sans" font-size="8.26">1</tspan><tspan font-family="Liberation Sans" font-size="8.26">2</tspan><tspan font-family="Liberation Sans" font-size="8.26">:</tspan><tspan font-family="Liberation Sans" font-size="8.26">0</tspan><tspan font-family="Liberation Sans" font-size="8.26">0</tspan></text>
<text text-anchor="middle" x="826.10 831.10 836.10 841.10 846.10" y="471" font-size="8.7" fill="#111" stroke="#111" stroke-width="0.25" ><tspan font-family="Liberation Sans" font-size="8.26">1</tspan><tspan font-family="Liberation Sans" font-size="8.26">4</tspan><tspan font-family="Liberation Sans" font-size="8.26">:</tspan><tspan font-family="Liberation Sans" font-size="8.26">0</tspan><tspan font-family="Liberation Sans" font-size="8.26">0</tspan></text>
<text text-anchor="middle" x="892.70 897.70 902.70 907.70 912.70" y="471" font-size="8.7" fill="#111" stroke="#111" stroke-width="0.25" ><tspan font-family="Liberation Sans" font-size="8.26">1</tspan><tspan font-family="Liberation Sans" font-size="8.26">6</tspan><tspan font-family="Liberation Sans" font-size="8.26">:</tspan><tspan font-family="Liberation Sans" font-size="8.26">0</tspan><tspan font-family="Liberation Sans" font-size="8.26">0</tspan></text>
<text text-anchor="middle" x="959.30 964.30 969.30 974.30 979.30" y="471" font-size="8.7" fill="#111" stroke="#111" stroke-width="0.25" ><tspan font-family="Liberation Sans" font-size="8.26">1</tspan><tspan font-family="Liberation Sans" font-size="8.26">8</tspan><tspan font-family="Liberation Sans" font-size="8.26">:</tspan><tspan font-family="Liberation Sans" font-size="8.26">0</tspan><tspan font-family="Liberation Sans" font-size="8.26">0</tspan></text>
<text text-anchor="middle" x="1025.90 1030.90 1035.90 1040.90 1045.90" y="471" font-size="8.7" fill="#111" stroke="#111" stroke-width="0.25" ><tspan font-family="Liberation Sans" font-size="8.26">2</tspan><tspan font-family="Liberation Sans" font-size="8.26">0</tspan><tspan font-family="Liberation Sans" font-size="8.26">:</tspan><tspan font-family="Liberation Sans" font-size="8.26">0</tspan><tspan font-family="Liberation Sans" font-size="8.26">0</tspan></text>
<text text-anchor="middle" x="1092.50 1097.50 1102.50 1107.50 1112.50" y="471" font-size="8.7" fill="#111" stroke="#111" stroke-width="0.25" ><tspan font-family="Liberation Sans" font-size="8.26">2</tspan><tspan font-family="Liberation Sans" font-size="8.26">2</tspan><tspan font-family="Liberation Sans" font-size="8.26">:</tspan><tspan font-family="Liberation Sans" font-size="8.26">0</tspan><tspan font-family="Liberation Sans" font-size="8.26">0</tspan></text>
<text text-anchor="middle" x="1159.10 1164.10 1169.10 1174.10 1179.10" y="471" font-size="8.7" fill="#111" stroke="#111" stroke-width="0.25" ><tspan font-family="Liberation Sans" font-size="8.26">0</tspan><tspan font-family="Liberation Sans" font-size="8.26">0</tspan><tspan font-family="Liberation Sans" font-size="8.26">:</tspan><tspan font-family="Liberation Sans" font-size="8.26">0</tspan><tspan font-family="Liberation Sans" font-size="8.26">0</tspan></text>
<text text-anchor="middle" x="1225.70 1230.70 1235.70 1240.70 1245.70" y="471" font-size="8.7" fill="#111" stroke="#111" stroke-width="0.25" ><tspan font-family="Liberation Sans" font-size="8.26">0</tspan><tspan font-family="Liberation Sans" font-size="8.26">2</tspan><tspan font-family="Liberation Sans" font-size="8.26">:</tspan><tspan font-family="Liberation Sans" font-size="8.26">0</tspan><tspan font-family="Liberation Sans" font-size="8.26">0</tspan></text>
<text text-anchor="middle" x="1292.30 1297.30 1302.30 1307.30 1312.30" y="471" font-size="8.7" fill="#111" stroke="#111" stroke-width="0.25" ><tspan font-family="Liberation Sans" font-size="8.26">0</tspan><tspan font-family="Liberation Sans" font-size="8.26">4</tspan><tspan font-family="Liberation Sans" font-size="8.26">:</tspan><tspan font-family="Liberation Sans" font-size="8.26">0</tspan><tspan font-family="Liberation Sans" font-size="8.26">0</tspan></text>
</g>
<text text-anchor="middle" x="747.11 752.92 758.74 764.55 770.37 776.18 782.00 787.81 793.63 799.44 805.26 811.07 816.89 822.70 828.52 834.33 840.15 845.96 851.78 857.59 863.41 869.22 875.04 880.85 886.67 892.48 898.30 904.11 909.93 915.74 921.56 927.37 933.19 939.00 944.82 950.63 956.45 962.26 968.08 973.89 979.71 985.52 991.34 997.15 1002.97 1008.78 1014.60 1020.41 1026.23 1032.04 1037.86 1043.67 1049.49 1055.30 1061.12 1066.93" y="120.3" font-size="9.8" font-weight="bold" fill="#111" stroke="#111" stroke-width="0.1" transform="translate(0 120.3) scale(1 1.13) translate(0 -120.3)">Http&#160;sessions&#160;-&#160;1&#160;day&#160;-&#160;1<tspan font-family="Liberation Sans" font-size="9.80">0</tspan>/31/25&#160;on&#160;/gc15141q_ytm-sales1</text>
<g stroke="#222" stroke-width="0.8"><rect x="1204.3" y="479.1" width="7.5" height="7.5" fill="#00f000"/><rect x="1174.2" y="489.8" width="7.5" height="7.5" fill="#0000e8"/><rect x="1174.2" y="500.7" width="7.5" height="7.5" fill="#e0302a"/></g>
<g fill="#111" stroke="#111" stroke-width="0.25" font-size="8.9" style="white-space:pre">
<text text-anchor="middle" x="1218.49 1223.47 1228.45 1233.43 1238.41 1243.39 1248.37 1253.35 1258.33 1263.31 1268.29" y="486.6" font-size="8.8" fill="#111" stroke="#111" stroke-width="0.25" >Mean&#160;&#160;Mean:</text>
<text text-anchor="middle" x="1188.49 1193.47 1198.45 1203.43 1208.41 1213.39 1218.37 1223.35 1228.33 1233.31 1238.29 1243.27 1248.25 1253.23 1258.21 1263.19 1268.17" y="497.4" font-size="8.8" fill="#111" stroke="#111" stroke-width="0.25" >Maximum&#160;&#160;Maximum:</text>
<text text-anchor="middle" x="1188.49 1193.47 1198.45 1203.43 1208.41 1213.39 1218.37 1223.35 1228.33 1233.31 1238.29 1243.27 1248.25 1253.23 1258.21 1263.19 1268.17 1273.15" y="508.4" font-size="8.8" fill="#111" stroke="#111" stroke-width="0.25" >95th&#160;percentile&#160;&#160;:</text>
<text text-anchor="middle" x="1308.59 1313.57 1318.55 1323.53 1328.51" y="486.6" font-size="8.8" fill="#111" stroke="#111" stroke-width="0.25" >141&#160;m</text>
<text text-anchor="middle" x="1303.61 1308.59 1313.57 1318.55 1323.53 1328.51" y="497.4" font-size="8.8" fill="#111" stroke="#111" stroke-width="0.25" >2<tspan font-family="Liberation Sans" font-size="8.36">0</tspan><tspan font-family="Liberation Sans" font-size="8.36">0</tspan><tspan font-family="Liberation Sans" font-size="8.36">0</tspan>&#160;m</text>
<text text-anchor="middle" x="1303.61 1308.59 1313.57 1318.55 1323.53 1328.51" y="508.4" font-size="8.8" fill="#111" stroke="#111" stroke-width="0.25" >1<tspan font-family="Liberation Sans" font-size="8.36">0</tspan><tspan font-family="Liberation Sans" font-size="8.36">0</tspan><tspan font-family="Liberation Sans" font-size="8.36">0</tspan>&#160;m</text>
</g>
<text transform="translate(1331.5 105.2) rotate(90)" font-size="8.3" fill="#a9a9a9" textLength="79" lengthAdjust="spacingAndGlyphs">Created with JRobin</text>
</svg>
<div class="abs" id="fn1" style="right:260px;top:517px;height:11px;line-height:11px;font-family:'Liberation Serif',serif;font-size:9.15px;color:#686868;-webkit-text-stroke:0.15px #686868;white-space:nowrap;transform-origin:100% 50%">The units of the values are "m" for milli (1 / 1000), "k" for kilo/thousands, "M" for mega/millions, "G" for giga/billions and "u" for micro (1 / 1000000)</div>
<div class="abs" id="fl0" style="left:1246.8px;top:527px;height:11px;line-height:11px;font-family:'Liberation Serif',serif;font-size:9.15px;color:#2874b2;-webkit-text-stroke:0.15px #2874b2;white-space:nowrap;transform-origin:0 50%">Last value</div>
<div class="abs" id="fl1" style="left:1293.8px;top:527px;height:11px;line-height:11px;font-family:'Liberation Serif',serif;font-size:9.15px;color:#2874b2;-webkit-text-stroke:0.15px #2874b2;white-space:nowrap;transform-origin:0 50%">XML</div>
<div class="abs" id="fl2" style="left:1323.2px;top:527px;height:11px;line-height:11px;font-family:'Liberation Serif',serif;font-size:9.15px;color:#2874b2;-webkit-text-stroke:0.15px #2874b2;white-space:nowrap;transform-origin:0 50%">TXT</div>
<svg width="1600" height="110" viewBox="0 0 1600 110"><defs><filter id="bsh" x="-20%" y="-20%" width="140%" height="150%"><feGaussianBlur stdDeviation="0.7"/></filter></defs>
<circle cx="456.35" cy="91.65" r="9.4" fill="#000" opacity="0.22" filter="url(#bsh)"/>
<circle cx="456.35" cy="90.75" r="9.55" fill="#e63a3c"/>
<g transform="translate(456.35 95.9) scale(0.25)"><text x="0" y="0" text-anchor="middle" font-family="Liberation Sans" font-size="57.6" fill="#fff">1</text></g>
<circle cx="534.45" cy="90.7" r="9.4" fill="#000" opacity="0.22" filter="url(#bsh)"/>
<circle cx="534.45" cy="89.8" r="9.55" fill="#e63a3c"/>
<g transform="translate(534.45 94.95) scale(0.25)"><text x="0" y="0" text-anchor="middle" font-family="Liberation Sans" font-size="57.6" fill="#fff">2</text></g>
<circle cx="624.5" cy="90.9" r="9.4" fill="#000" opacity="0.22" filter="url(#bsh)"/>
<circle cx="624.5" cy="90.0" r="9.55" fill="#e63a3c"/>
<g transform="translate(624.5 95.15) scale(0.25)"><text x="0" y="0" text-anchor="middle" font-family="Liberation Sans" font-size="57.6" fill="#fff">3</text></g>
<circle cx="676.3" cy="89.35000000000001" r="9.4" fill="#000" opacity="0.22" filter="url(#bsh)"/>
<circle cx="676.3" cy="88.45" r="9.55" fill="#e63a3c"/>
<g transform="translate(676.3 93.60000000000001) scale(0.25)"><text x="0" y="0" text-anchor="middle" font-family="Liberation Sans" font-size="57.6" fill="#fff">4</text></g>
<circle cx="751.6" cy="90.15" r="9.4" fill="#000" opacity="0.22" filter="url(#bsh)"/>
<circle cx="751.6" cy="89.25" r="9.55" fill="#e63a3c"/>
<g transform="translate(751.6 94.4) scale(0.25)"><text x="0" y="0" text-anchor="middle" font-family="Liberation Sans" font-size="57.6" fill="#fff">5</text></g>
<circle cx="830.7" cy="91.5" r="9.4" fill="#000" opacity="0.22" filter="url(#bsh)"/>
<circle cx="830.7" cy="90.6" r="9.55" fill="#e63a3c"/>
<g transform="translate(830.7 95.75) scale(0.25)"><text x="0" y="0" text-anchor="middle" font-family="Liberation Sans" font-size="57.6" fill="#fff">6</text></g>
</svg>
</div></body></html>
